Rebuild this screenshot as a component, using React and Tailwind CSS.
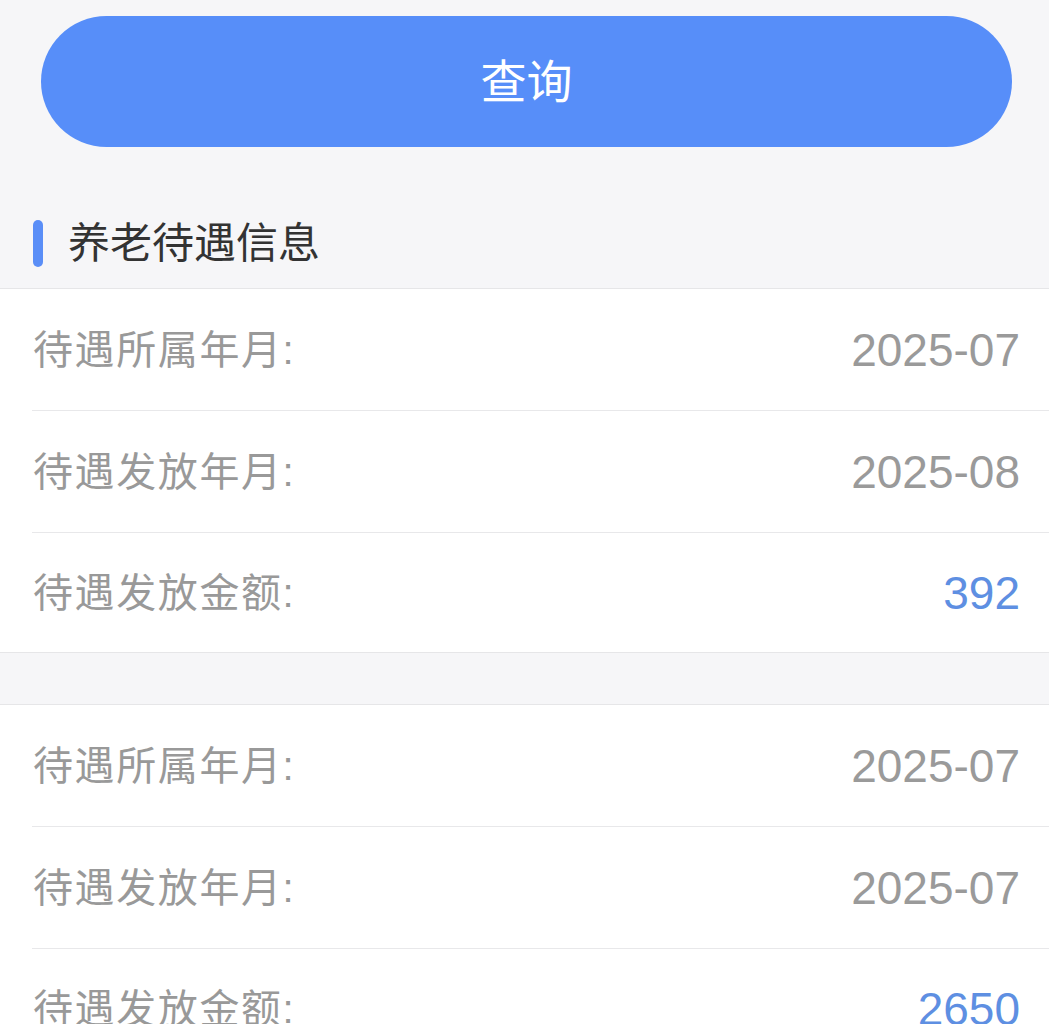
const font = '"Liberation Sans", "Noto Sans CJK SC", sans-serif'

const groups = [
  [
    { label: '待遇所属年月:', value: '2025-07' },
    { label: '待遇发放年月:', value: '2025-08' },
    { label: '待遇发放金额:', value: '392', amount: true },
  ],
  [
    { label: '待遇所属年月:', value: '2025-07' },
    { label: '待遇发放年月:', value: '2025-07' },
    { label: '待遇发放金额:', value: '2650', amount: true },
  ],
]

function InfoCard({ rows }) {
  return (
    <div className="bg-white border-y border-[#e6e6e8] pl-[32px]">
      {rows.map((row, idx) => (
        <div
          key={idx}
          className={`flex items-center justify-between pr-[29px] ${idx < rows.length - 1 ? 'h-[122px] border-b border-[#e8e8ea]' : 'h-[119px]'}`}
        >
          <span className="text-[40px] leading-none tracking-[1.6px] text-[#999999] pl-px">{row.label}</span>
          <span className={`text-[46px] leading-none ${row.amount ? 'text-[#5e8fe2]' : 'text-[#9a9a9a]'}`}>
            {row.value}
          </span>
        </div>
      ))}
    </div>
  )
}

export default function App() {
  return (
    <div className="min-h-screen bg-[#f6f6f8] pb-10" style={{ fontFamily: font }}>
      <div className="pl-[41px] pr-[37px] pt-[16px]">
        <button className="w-full h-[131px] rounded-full bg-[#578ef9] text-white text-[46px] leading-none">
          查询
        </button>
      </div>

      {/* section title */}
      <div className="flex items-center gap-[25px] pl-[33px] pt-[73px] pb-[21px]">
        <div className="w-[10px] h-[47px] rounded-full bg-[#5a8ef7]" />
        <h2 className="text-[42px] leading-none text-[#333333] font-normal">养老待遇信息</h2>
      </div>

      <InfoCard rows={groups[0]} />
      <div className="h-[51px]" />
      <InfoCard rows={groups[1]} />
    </div>
  )
}
